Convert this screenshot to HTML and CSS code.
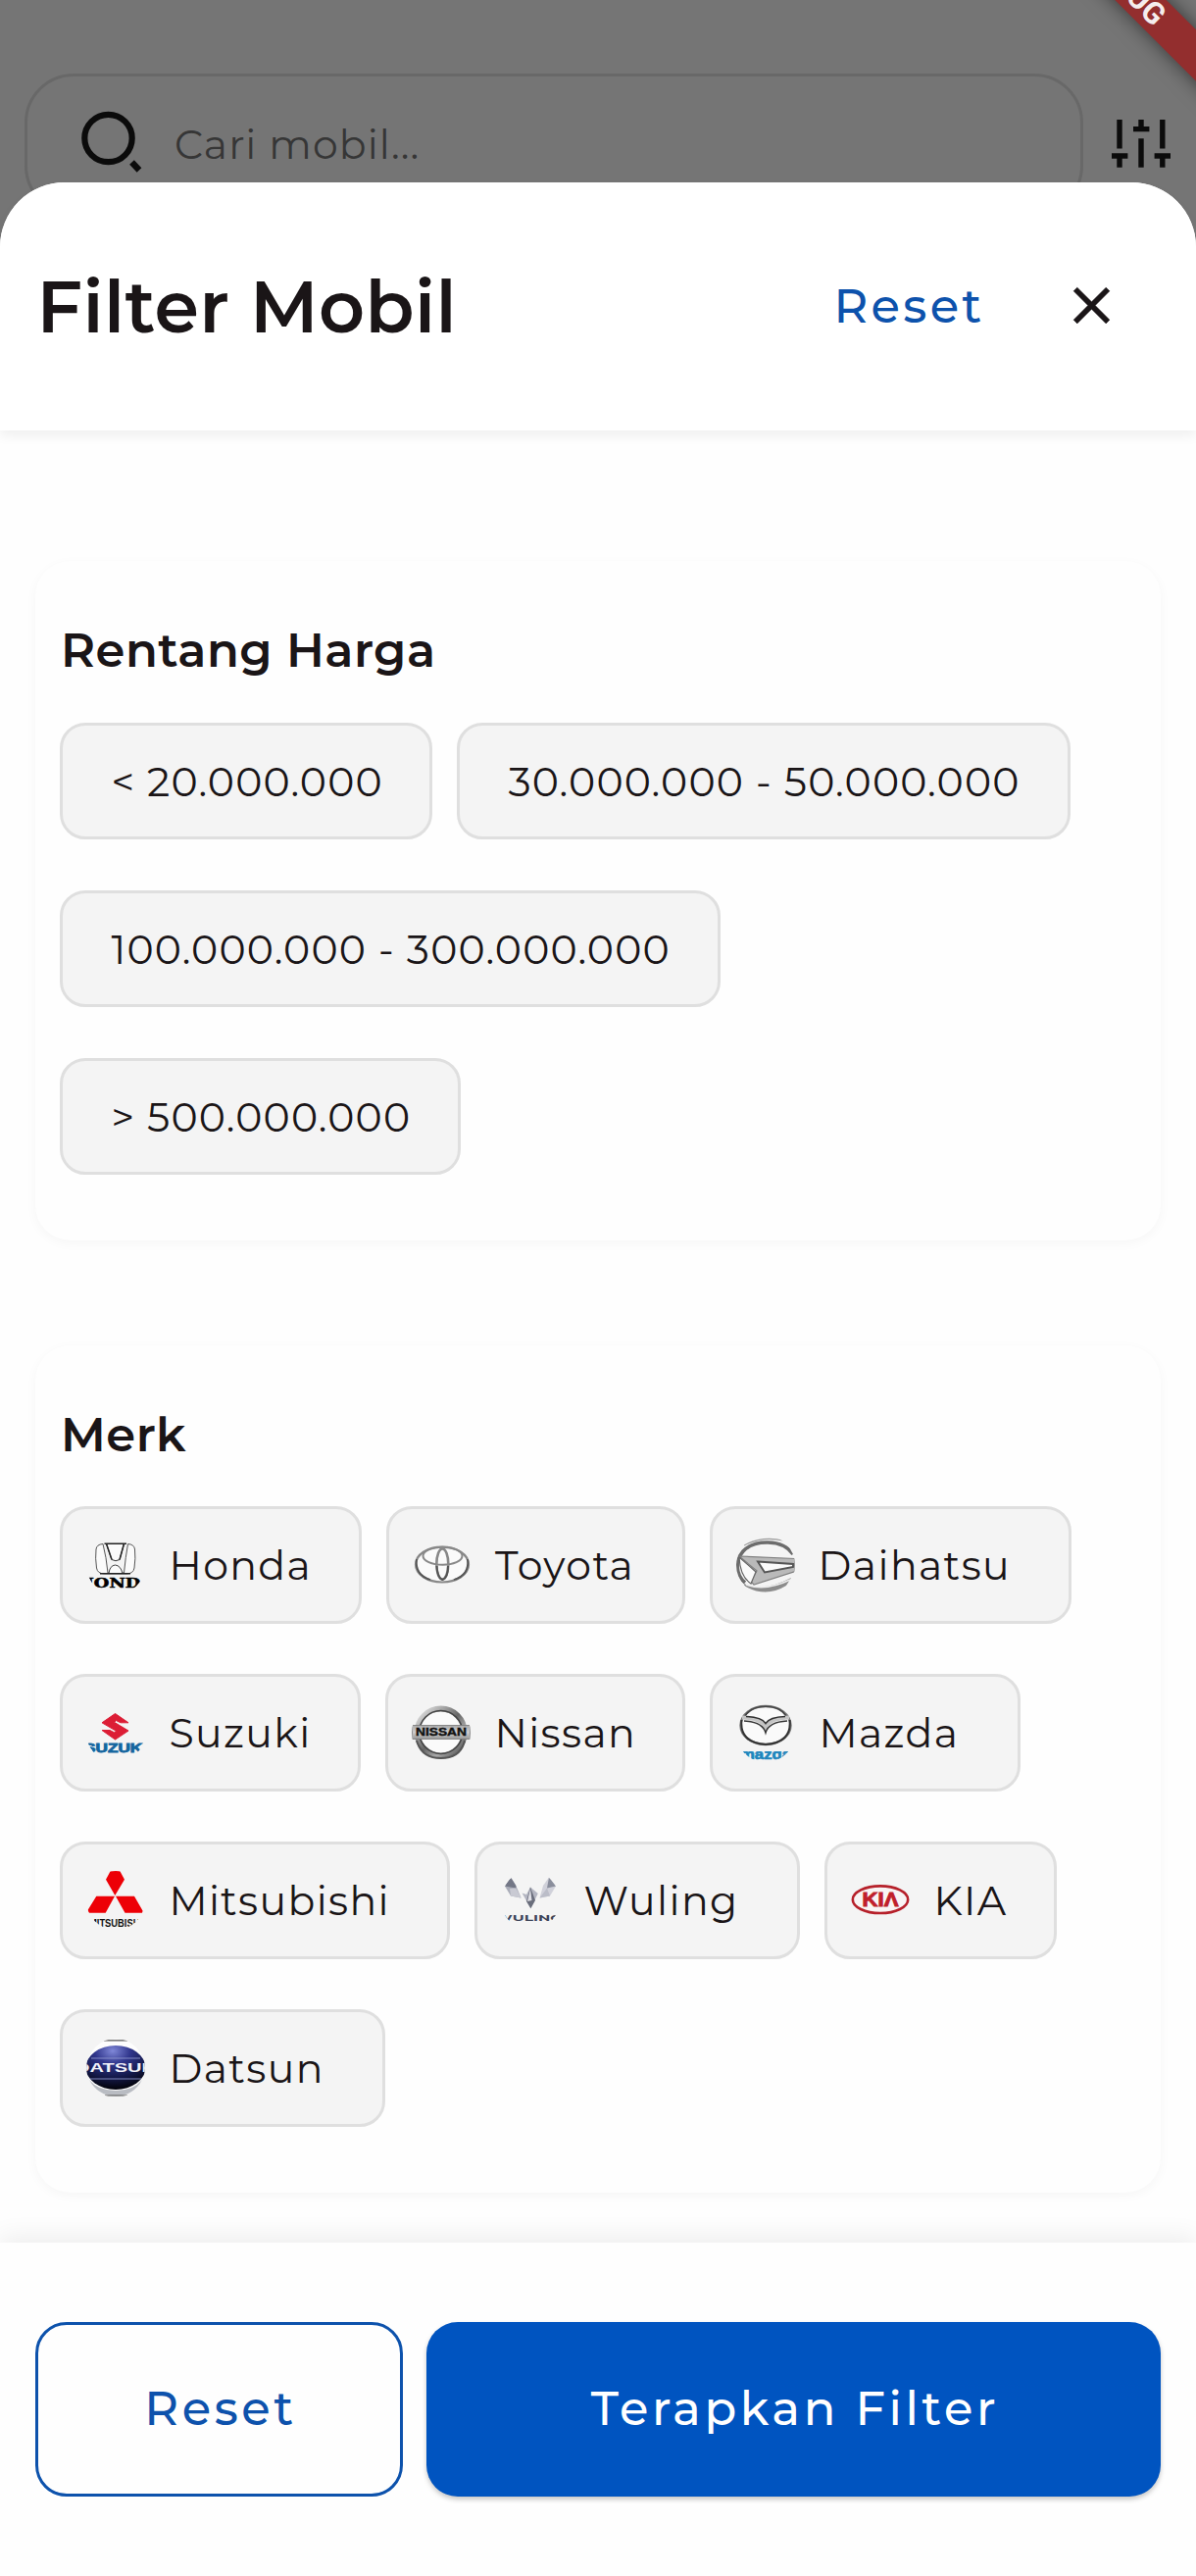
FILE: index.html
```html
<!DOCTYPE html>
<html lang="id">
<head>
<meta charset="utf-8">
<title>Filter Mobil</title>
<link rel="stylesheet" href="styles.css">
</head>
<body>
<div class="backdrop">
  <div class="search-row">
    <div class="search-box">
      <svg class="search-icon" viewBox="0 0 64 68"><ellipse cx="27.5" cy="32" rx="24.2" ry="24.2" fill="none" stroke="#0b0b0b" stroke-width="6.2"/><path d="M51.5 56.5L59 64.5" stroke="#0b0b0b" stroke-width="6.5"/></svg>
      <span class="search-hint">Cari mobil...</span>
    </div>
    <svg class="tune-icon" viewBox="0 0 60 50"><path d="M8 1v29.5M8 38v11.7M0 38h16.4M30 1v12M30 20.3v29.4M22 10.6h16.4M51.8 1v29.5M51.8 38v11.7M43.6 38h16.4" fill="none" stroke="#0b0b0b" stroke-width="5.4"/></svg>
  </div>
  <div class="debug-banner">DEBUG</div>
</div>

<main class="sheet">
  <header class="sheet-header">
    <h1 class="sheet-title">Filter Mobil</h1>
    <button class="link-reset">Reset</button>
    <svg class="close-icon" viewBox="0 0 24 24"><path d="M19 6.41L17.59 5 12 10.59 6.41 5 5 6.41 10.59 12 5 17.59 6.41 19 12 13.41 17.59 19 19 17.59 13.41 12z" fill="#1a1517" stroke="#1a1517" stroke-width=".2"/></svg>
  </header>

  <div class="content">
    <section class="card">
      <h2 class="card-title">Rentang Harga</h2>
      <div class="chips">
        <div class="chip price-1">&lt; 20.000.000</div>
        <div class="chip price-2">30.000.000 - 50.000.000</div>
        <div class="chip price-3">100.000.000 - 300.000.000</div>
        <div class="chip price-4">&gt; 500.000.000</div>
      </div>
    </section>

    <section class="card">
      <h2 class="card-title">Merk</h2>
      <div class="chips">
        <div class="chip brand honda">
          <svg class="logo" viewBox="0 0 60 60">
            <g fill="#fbfbfb" stroke="#333" stroke-width="1"><path d="M17 8.5Q10.500 9 10 14Q9 23 10.500 33Q11.500 38.800 18 38.800H41.500Q48 38.800 49 33Q50.500 23 49.500 14Q49 9 42.500 8.500Q40 22 38.500 38H22Q20.500 22 17 8.500Z" stroke="#555"/><path d="M20.500 8.500L26 24.500Q30 27 34 24.500L38.500 8.500Z"/><path d="M23 38.500Q24 30.500 29.500 30Q35 30.500 37 38.500Z" stroke="#444"/></g>
            <path d="M20.500 8.300L26 24.500M38.500 8.300L34 24.500M18.500 8.300H41M14 38.700H45" stroke="#222" stroke-width="1.500" fill="none"/>
            <text class="logo-serif" x="30" y="52.800" font-size="12" stroke="#000" stroke-width=".5" textLength="78" lengthAdjust="spacingAndGlyphs" text-anchor="middle">HONDA</text>
          </svg><span class="name">Honda</span>
        </div>
        <div class="chip brand toyota">
          <svg class="logo" viewBox="0 0 60 60">
            <ellipse cx="30" cy="29.500" rx="27" ry="18" fill="#fafafa" stroke="#888" stroke-width="2.200"/>
            <path d="M4 24Q2 40 18 45M56 24Q58 40 42 45" fill="none" stroke="#555" stroke-width="1.800"/>
            <ellipse cx="30.500" cy="20.700" rx="20" ry="9" fill="none" stroke="#888" stroke-width="2"/>
            <ellipse cx="30.300" cy="29" rx="6" ry="15.500" fill="none" stroke="#888" stroke-width="2.600"/>
            <path d="M24.500 31Q25 43 30.300 45Q36 43 36 31" fill="none" stroke="#555" stroke-width="2"/>
          </svg><span class="name">Toyota</span>
        </div>
        <div class="chip brand daihatsu">
          <svg class="logo" viewBox="0 0 60 60">
            <path d="M58 19C47 3 18 4 7 16C-1 25-1 40 9 48" fill="none" stroke="#6c6c6c" stroke-width="3.600"/>
            <path d="M8 10Q26 0 48 5" fill="none" stroke="#999" stroke-width="1.200"/>
            <path d="M3 21L60 23.500V36.500L18 50L15 47L21 36Z" fill="#b9b9b9" stroke="#808080" stroke-width="1.200"/>
            <path d="M3 22L20 37L15 49Q4 42 3 22Z" fill="#fafafa" stroke="#666" stroke-width="1.200"/>
            <path d="M22 26.500L58 29V32L29 37.500Z" fill="#fafafa" stroke="#555" stroke-width="1.900"/>
            <path d="M8 49Q28 58 56 43L51 51Q30 64 8 51Z" fill="#8c8c8c"/><path d="M10 50Q30 57 55 45" fill="none" stroke="#eee" stroke-width="1.600"/>
          </svg><span class="name">Daihatsu</span>
        </div>
        <div class="chip brand suzuki">
          <svg class="logo" viewBox="0 0 60 60">
            <path d="M29.500 10.500L16 19.800L30.500 28.300L28.500 29.800L24 27.500H16L29.500 37L43 28L28.500 19.300L30.500 17.600L35 19.800H43Z" fill="#dc1d35" stroke="#dc1d35" stroke-width="1"/>
            <text class="logo-sans" x="30" y="50" font-size="12" fill="#14669f" stroke="#14669f" stroke-width=".8" textLength="64" lengthAdjust="spacingAndGlyphs" text-anchor="middle">SUZUKI</text>
          </svg><span class="name">Suzuki</span>
        </div>
        <div class="chip brand nissan">
          <svg class="logo" viewBox="0 0 60 60">
            <defs><linearGradient id="ring" x1="0" y1="0" x2="1" y2="1"><stop offset="0" stop-color="#eee"/><stop offset=".5" stop-color="#666"/><stop offset=".7" stop-color="#aaa"/><stop offset="1" stop-color="#444"/></linearGradient><linearGradient id="bar" x1="0" x2="0" y1="0" y2="1"><stop offset="0" stop-color="#aaa"/><stop offset=".5" stop-color="#ccc"/><stop offset="1" stop-color="#999"/></linearGradient></defs>
            <circle cx="29.700" cy="29.500" r="24" fill="#fafafa" stroke="url(#ring)" stroke-width="6"/>
            <circle cx="29.700" cy="29.500" r="22" fill="none" stroke="#444" stroke-width="1.500"/>
            <path d="M5 38Q10 56 29.700 56Q50 56 54 38" fill="none" stroke="#555" stroke-width="2"/>
            <rect x=".5" y="22.400" width="59" height="14.200" fill="url(#bar)" stroke="#777" stroke-width=".8"/>
            <text class="logo-sans" x="30" y="33.200" font-size="10" fill="#111" stroke="#111" stroke-width=".4" textLength="52" lengthAdjust="spacingAndGlyphs" text-anchor="middle">NISSAN</text>
          </svg><span class="name">Nissan</span>
        </div>
        <div class="chip brand mazda">
          <svg class="logo" viewBox="0 0 60 60">
            <ellipse cx="30" cy="22.500" rx="25.500" ry="19.500" fill="#fafafa" stroke="#777" stroke-width="2.400"/>
            <path d="M5.500 17Q3 40 30 42Q57 40 54.500 17" fill="none" stroke="#333" stroke-width="2"/>
            <path d="M9 13Q15 3.300 30 3.300Q45 3.300 51 13" fill="none" stroke="#444" stroke-width="1.600"/>
            <path d="M6 14.500Q25 15 30 24Q35 15 54 14.500" fill="none" stroke="#c4c4c4" stroke-width="4"/>
            <path d="M8 18Q27 19 30 30Q33 19 52 18M10 13.500Q26 14 30 20.500Q34 14 50 13.500" fill="none" stroke="#333" stroke-width="1.500"/>
            <svg x="6" y="49" width="48" height="9"><text class="logo-sans" x="24" y="8.300" font-size="15" fill="#1f86bd" stroke="#1f86bd" stroke-width=".7" textLength="52" lengthAdjust="spacingAndGlyphs" text-anchor="middle">mazda</text></svg>
          </svg><span class="name">Mazda</span>
        </div>
        <div class="chip brand mitsubishi">
          <svg class="logo" viewBox="0 0 60 60">
            <path d="M24.700 0H34.300L39 8.800L29.300 25L20 8.800ZM10.300 25.800H29L19.700 42.800H1.200V40.500ZM49 25.800H30L39.500 42.800H57.500V40.500Z" fill="#ed0006"/>
            <text class="logo-sans" x="30" y="56.500" font-size="11.500" fill="#111" textLength="54" lengthAdjust="spacingAndGlyphs" text-anchor="middle">MITSUBISHI</text>
          </svg><span class="name">Mitsubishi</span>
        </div>
        <div class="chip brand wuling">
          <svg class="logo" viewBox="0 0 60 60">
            <path d="M10 6.500L4 15.500L10 25.500L20.600 27.500L15.300 15Z" fill="#a9acb8"/><path d="M10 6.500L4 15.500L15.300 17.500V15Z" fill="#737786"/><path d="M9 18L15.300 17.500L20.600 27.500L10 25.500Z" fill="#c9cad3"/>
            <path d="M49 6.500L56 15.500L50 25.500L39.500 27.500L43 15Z" fill="#d0d1da"/><path d="M49 6.500L56 15.500L47 17.500Z" fill="#8a8e9c"/><path d="M47 17.500L50 25.500L39.500 27.500Z" fill="#bbbdc8"/>
            <path d="M30 16.500L37.800 23L30.400 38.200L21.500 22.500L26 24Z" fill="#b4b6c2"/><path d="M30 16.500L35 30L30.400 38.200L26 31Z" fill="#6a6e7c"/><path d="M30 18L31.500 30L27 31Z" fill="#e0e0e6"/>
            <text class="logo-wide" x="28" y="50.500" font-size="8.800" fill="#3b4358" textLength="68" lengthAdjust="spacingAndGlyphs" text-anchor="middle">WULING</text>
          </svg><span class="name">Wuling</span>
        </div>
        <div class="chip brand kia">
          <svg class="logo" viewBox="0 0 60 60">
            <ellipse cx="30" cy="29.200" rx="28.200" ry="13.800" fill="#f8f4f4" stroke="#b6202a" stroke-width="2.600"/>
            <text class="logo-sans" x="30" y="36.200" font-size="19.500" fill="#c01f2b" stroke="#c01f2b" stroke-width=".9" textLength="37" lengthAdjust="spacingAndGlyphs" text-anchor="middle">KIΛ</text>
          </svg><span class="name">KIA</span>
        </div>
        <div class="chip brand datsun">
          <svg class="logo" viewBox="0 0 60 60">
            <defs><radialGradient id="globe" cx=".45" cy=".12" r=".85"><stop offset="0" stop-color="#8088d8"/><stop offset=".35" stop-color="#30368c"/><stop offset=".7" stop-color="#151a4c"/><stop offset="1" stop-color="#04050f"/></radialGradient></defs>
            <circle cx="30" cy="29.500" r="29.500" fill="#fdfdfd"/>
            <path d="M3 42Q12 58.500 30 58.500Q48 58.500 57 42Q48 53 30 53Q12 53 3 42Z" fill="#b9bcc2"/>
            <path d="M18 1.800H42" stroke="#555" stroke-width="1.200"/><path d="M19 58H42" stroke="#555" stroke-width="1"/>
            <ellipse cx="30" cy="29.500" rx="30.500" ry="22.400" fill="url(#globe)"/>
            <path d="M5 20H55M4 41H56" stroke="#8f96cf" stroke-width=".9"/>
            <text class="logo-sans" x="30" y="34.300" font-size="13" fill="#f1f1f8" textLength="82" lengthAdjust="spacingAndGlyphs" text-anchor="middle">DATSUN</text>
          </svg><span class="name">Datsun</span>
        </div>
      </div>
    </section>
  </div>

  <footer class="actions">
    <button class="btn btn-outline">Reset</button>
    <button class="btn btn-primary">Terapkan Filter</button>
  </footer>
</main>
</body>
</html>
```
FILE: styles.css
```css
* { box-sizing: border-box; }

body {
  margin: 0;
  width: 1220px;
  height: 2627px;
  position: relative;
  overflow: hidden;
  background: #757575;
  color: #1a1517;
  font-family: Montserrat, Inter, sans-serif;
}

h1, h2 { margin: 0; }

button {
  font-family: inherit;
  border: 0;
  background: none;
  padding: 0;
}

/* Dimmed page behind the sheet */
.backdrop {
  position: relative;
  height: 250px;
  overflow: hidden;
  padding: 75px 25px 0;
}

.search-row {
  display: flex;
  align-items: flex-start;
  gap: 29px;
}

.search-box {
  display: flex;
  align-items: center;
  width: 1080px;
  height: 144px;
  border: 3px solid #686868;
  border-radius: 50px;
  padding-left: 55px;
}

.search-icon {
  width: 64px;
  height: 68px;
  margin-top: -8px;
}

.search-hint {
  margin-left: 31px;
  font-size: 41px;
  font-weight: 400;
  letter-spacing: 1.1px;
  color: #363636;
}

.tune-icon {
  width: 60px;
  height: 50px;
  margin-top: 46px;
}

.debug-banner {
  position: absolute;
  left: 969px;
  top: -33px;
  width: 360px;
  height: 37px;
  transform: rotate(45deg);
  background: #932e2e;
  box-shadow: 0 0 20px rgba(0, 0, 0, .55);
  color: #f5eded;
  font: 700 31px/37px Roboto, sans-serif;
  text-align: center;
}

/* Bottom sheet */
.sheet {
  position: absolute;
  inset: 186px 0 0;
  display: flex;
  flex-direction: column;
  background: #fefefe;
  border-radius: 66px 66px 0 0;
}

.sheet-header {
  display: flex;
  align-items: center;
  height: 252.6px;
  padding: 0 75.5px 2px 37.5px;
  background: #fff;
  border-radius: 66px 66px 0 0;
  box-shadow: 0 6px 12px rgba(0, 0, 0, .06);
}

.sheet-title {
  padding-top: 3px;
  font-size: 73px;
  font-weight: 600;
  letter-spacing: .4px;
}

.link-reset {
  margin-left: auto;
  padding-top: 1px;
  font-size: 48px;
  font-weight: 500;
  letter-spacing: 3.3px;
  color: #0d52ac;
}

.close-icon {
  width: 63px;
  height: 63px;
  margin-left: 77px;
}

.content {
  flex: 1;
  display: flex;
  flex-direction: column;
  gap: 106.5px;
  padding: 133.8px 36px 0;
}

.card {
  padding: 61px 26px 67px;
  border-radius: 36px;
  background: #fefefe;
  box-shadow: 0 3px 12px rgba(0, 0, 0, .035);
}

.card-title {
  margin-bottom: 43.5px;
  font-size: 48px;
  font-weight: 600;
  line-height: 60px;
  letter-spacing: .5px;
}

.chips {
  display: flex;
  flex-wrap: wrap;
  gap: 51.6px 25px;
  margin-left: -.6px;
}

.chip {
  display: flex;
  align-items: center;
  height: 119.4px;
  padding: 1px 0 0 49px;
  border: 3px solid #dfdfdf;
  border-radius: 26px;
  background: #f4f4f4;
  font-size: 41px;
  font-weight: 400;
  letter-spacing: 1.2px;
  white-space: nowrap;
}

.price-1 { width: 380px; }
.price-2 { width: 626px; }
.price-3 { width: 674px; }
.price-4 { width: 409px; }

.brand {
  padding: 0 0 0 24px;
  letter-spacing: 1.4px;
}

.honda { width: 307.7px; }
.toyota { width: 304.5px; }
.daihatsu { width: 369.7px; }
.suzuki { width: 307px; }
.nissan { width: 306px; }
.mazda { width: 316.6px; }
.mitsubishi { width: 398px; }
.wuling { width: 332px; }
.kia { width: 237px; }
.datsun { width: 331.7px; }

.logo {
  width: 60px;
  height: 60px;
  margin-right: 24px;
  border-radius: 50%;
  overflow: hidden;
  letter-spacing: 0;
}

.logo-serif { font-family: "DejaVu Serif", serif; font-weight: 700; }
.logo-sans { font-family: "Liberation Sans", sans-serif; font-weight: 700; }
.logo-wide { font-family: Montserrat, sans-serif; font-weight: 700; }

/* Footer */
.actions {
  display: flex;
  gap: 24px;
  height: 340.3px;
  padding: 81.3px 36px 0;
  background: #fefefe;
  box-shadow: 0 -6px 24px rgba(0, 0, 0, .07);
}

.btn {
  height: 178px;
  padding: 0 0 2px 3px;
  border-radius: 32px;
  font-size: 48px;
  font-weight: 500;
  letter-spacing: 3.6px;
}

.btn-outline {
  width: 375px;
  border: 3px solid #0d52ac;
  color: #0d52ac;
}

.btn-primary {
  flex: 1;
  background: #0054c0;
  color: #fff;
  box-shadow: 0 3px 5px rgba(0, 0, 0, .22);
}
```
